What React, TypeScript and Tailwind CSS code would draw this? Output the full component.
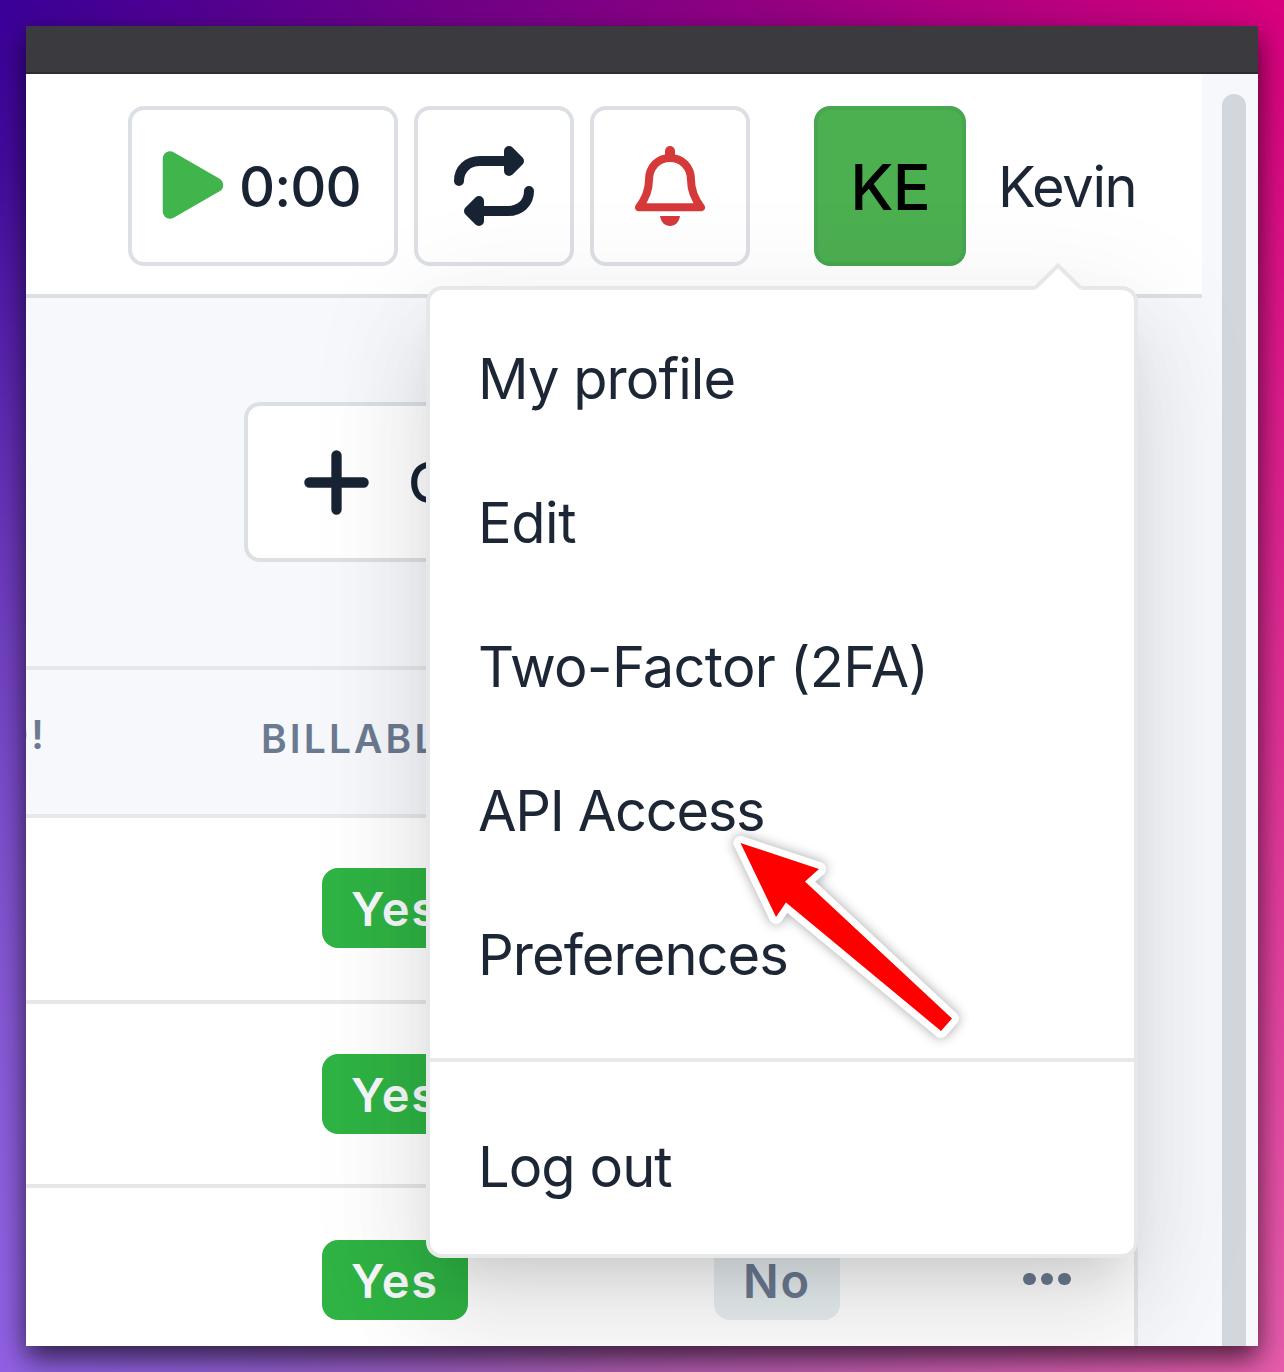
import React from "react";

const ICON_INK = "#182433";

function PlayIcon() {
  return (
    <svg className="h-20 w-20 shrink-0" viewBox="0 0 80 80">
      <path d="M18 12.500V65.500L64 39Z" fill="#40b54b" stroke="#40b54b" strokeWidth="14.500" strokeLinejoin="round" />
    </svg>
  );
}

function RepeatIcon() {
  return (
    <svg className="h-20 w-20" viewBox="0 0 80 80" fill="none" stroke={ICON_INK} strokeWidth="10" strokeLinecap="round" strokeLinejoin="round">
      <path d="M5 35C5 23 14 15 26 15H55" />
      <path d="M55 5V25L65 15Z" fill={ICON_INK} />
      <path d="M75 45C75 57 66 65 54 65H25" />
      <path d="M25 55V75L15 65Z" fill={ICON_INK} />
    </svg>
  );
}

function BellIcon() {
  return (
    <svg className="h-20 w-20" viewBox="0 0 80 80" fill="none" stroke="#d63939" strokeWidth="8" strokeLinecap="round" strokeLinejoin="round">
      <path d="M40 5V9" strokeWidth="10" />
      <path d="M9 61.3C16 52 19 44 19 34C19 21 28 12 40 12C52 12 61 21 61 34C61 44 64 52 71 61.3Z" />
      <path d="M30 70H50C49 76.500 45 80 40 80C35 80 31 76.500 30 70Z" fill="#d63939" stroke="none" />
    </svg>
  );
}

function PlusIcon() {
  return (
    <svg className="h-[65px] w-[65px] shrink-0" viewBox="0 0 66 66" stroke={ICON_INK} strokeWidth="10.500" strokeLinecap="round">
      <path d="M33 5.500V60.500M5.500 33H60.500" />
    </svg>
  );
}

function PointerArrow() {
  return (
    <svg className="absolute left-[280px] top-[520px] h-[240px] w-[270px] drop-shadow-[0_0_6px_rgba(0,0,0,0.35)]" viewBox="710 810 270 240">
      <path
        d="M740.500 843L819 869L805 881.500L952 1018.500L941 1031L786 902.500L776 917Z"
        fill="#ff0000"
        stroke="#ffffff"
        strokeWidth="14"
        strokeLinejoin="round"
        paintOrder="stroke"
      />
    </svg>
  );
}

function MenuItem({ children, tracking = "tracking-[-0.017em]" }: { children: React.ReactNode; tracking?: string }) {
  return (
    <a className="flex h-36 items-center pl-12 pt-[2px] text-[56px] leading-[80px] text-[#1d2635]">
      <span className={`whitespace-nowrap ${tracking}`}>{children}</span>
    </a>
  );
}

function UserMenu() {
  return (
    <div className="absolute left-[400px] top-[260px] h-[972px] w-[712px] rounded-2xl border-4 border-[#e6e7e8] bg-white py-4 shadow-[0_64px_96px_8px_rgba(0,0,0,0.07),0_24px_120px_20px_rgba(0,0,0,0.06),0_32px_40px_-20px_rgba(0,0,0,0.1)]">
      <svg className="absolute right-[52px] top-[-27px] h-[28px] w-[48px]" viewBox="0 0 48 28">
        <path d="M0 28V27L24 3L48 27V28Z" fill="#ffffff" />
        <path d="M1 25L24 2.500L47 25" fill="none" stroke="#e6e7e9" strokeWidth="4" />
      </svg>
      <MenuItem>My profile</MenuItem>
      <MenuItem tracking="tracking-[-0.008em]">Edit</MenuItem>
      <MenuItem tracking="tracking-[-0.013em]">Two-Factor (2FA)</MenuItem>
      <MenuItem tracking="tracking-[-0.024em]">API Access</MenuItem>
      <MenuItem>Preferences</MenuItem>
      <div className="my-8 h-1 bg-[#e7e8ea]" />
      <MenuItem>Log out</MenuItem>
      <PointerArrow />
    </div>
  );
}

function YesBadge() {
  return (
    <span className="flex h-20 w-[146px] shrink-0 items-center justify-center rounded-2xl bg-[#2fb344] text-[47px] font-semibold leading-none tracking-[0.04em] text-[#f6f8fb]">
      <span>Yes</span>
    </span>
  );
}

export default function App() {
  return (
    <div className="h-[1372px] w-[1284px] overflow-hidden bg-[radial-gradient(ellipse_620px_1200px_at_0%_100%,#9160e4_0%,rgba(145,96,228,0)_100%),linear-gradient(180deg,rgba(255,255,255,0)_0%,rgba(255,255,255,0.36)_100%),linear-gradient(90deg,#3a0099_0%,#6b0088_32%,#980081_64%,#d9007d_100%)] p-[26px] font-['Inter',sans-serif]">
      <div className="h-[1320px] w-[1232px] shadow-[0_12px_26px_rgba(0,0,0,0.68)]">
        <div className="relative flex h-full flex-col overflow-hidden bg-[#f6f8fb]">
          <div className="h-12 shrink-0 border-b-2 border-[#2d2d30] bg-[#3b3a3e]" />
          <div className="flex min-h-0 flex-1">
            <div className="flex w-[1176px] shrink-0 flex-col">
              <header className="flex h-56 shrink-0 items-start border-b-4 border-[#dce0e4] bg-white pl-[102px] pt-8">
                <div className="flex h-40 w-[270px] items-center rounded-2xl border-4 border-[#dce0e4] pl-[20px] text-[#182433]">
                  <PlayIcon />
                  <span className="ml-[7px] pt-[2px] text-[56px] font-medium leading-none tracking-[-0.016em]">0:00</span>
                </div>
                <div className="ml-4 flex h-40 w-40 items-center justify-center rounded-2xl border-4 border-[#dce0e4]">
                  <RepeatIcon />
                </div>
                <div className="ml-4 flex h-40 w-40 items-center justify-center rounded-2xl border-4 border-[#dce0e4]">
                  <BellIcon />
                </div>
                <div className="ml-16 flex h-40 w-[152px] items-center justify-center rounded-2xl border-4 border-[#48a64f] bg-[#4caf50] pt-[3px] text-[63px] font-medium leading-none tracking-[-0.016em] text-black">
                  <span>KE</span>
                </div>
                <div className="ml-[32px] flex h-40 items-center pt-[2px] text-[56px] leading-none tracking-[-0.024em] text-[#1d2635]">Kevin</div>
              </header>
              <div className="flex h-[368px] shrink-0 pl-[218px] pt-[104px]">
                <div className="flex h-40 w-[600px] items-center rounded-2xl border-4 border-[#dce0e4] bg-white pl-[56px]">
                  <PlusIcon />
                  <span className="ml-[39px] pt-[2px] text-[56px] font-medium leading-none text-[#182433]">C</span>
                </div>
              </div>
              <div className="flex w-[1112px] flex-1 flex-col border-r-4 border-t-4 border-[#e6e7e9] bg-white">
                <div className="flex h-[148px] shrink-0 items-center border-b-4 border-[#e6e7e9] bg-[#f6f8fb] pb-[8px] text-[39px] font-semibold leading-none tracking-[0.08em] text-[#6c7a91]">
                  <div className="flex w-[235px] shrink-0">
                    <span className="relative -top-1 ml-[-26px]">D!</span>
                  </div>
                  <span>BILLABLE</span>
                </div>
                <div className="h-[186px] shrink-0 border-b-4 border-[#e6e7e9] pl-[296px] pt-[50px]">
                  <YesBadge />
                </div>
                <div className="h-[184px] shrink-0 border-b-4 border-[#e6e7e9] pl-[296px] pt-[50px]">
                  <YesBadge />
                </div>
                <div className="flex h-[158px] shrink-0 pl-[296px] pt-[52px]">
                  <YesBadge />
                  <span className="ml-[246px] flex h-20 w-[126px] items-center justify-center rounded-2xl bg-[#e8eff1] text-[47px] font-semibold leading-none tracking-[0.04em] text-[#6c7a91]">
                    <span>No</span>
                  </span>
                  <span className="ml-[183px] flex h-[78px] items-center gap-[5px]">
                    <i className="h-[12.5px] w-[12.5px] rounded-full bg-[#6c7a91]" />
                    <i className="h-[12.5px] w-[12.5px] rounded-full bg-[#6c7a91]" />
                    <i className="h-[12.5px] w-[12.5px] rounded-full bg-[#6c7a91]" />
                  </span>
                </div>
              </div>
            </div>
            <div className="flex-1 pl-5 pt-5">
              <div className="h-full w-6 rounded-t-full bg-[#d2d6dd]" />
            </div>
          </div>
          <UserMenu />
        </div>
      </div>
    </div>
  );
}
